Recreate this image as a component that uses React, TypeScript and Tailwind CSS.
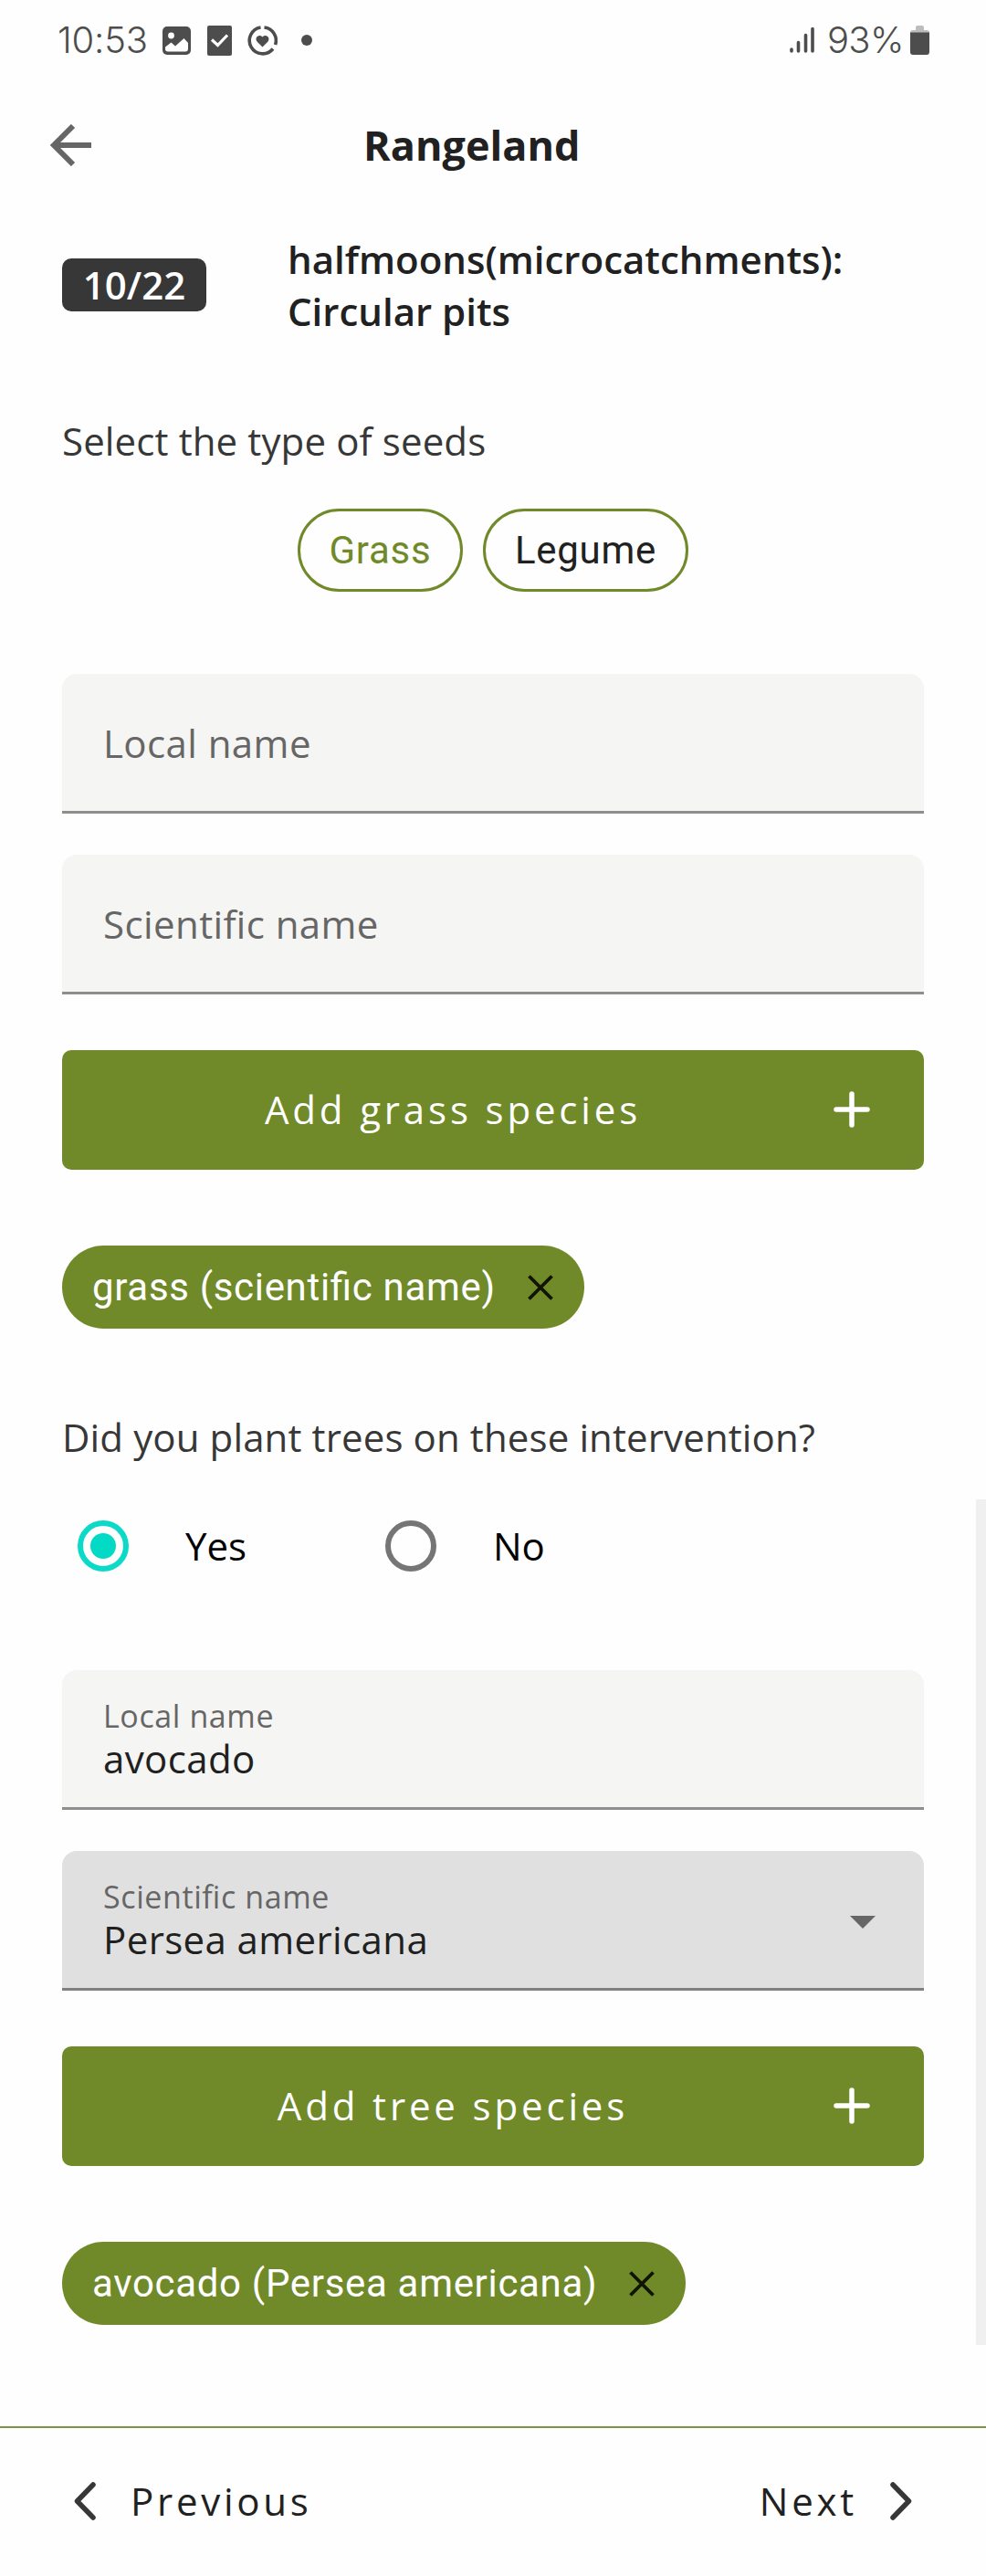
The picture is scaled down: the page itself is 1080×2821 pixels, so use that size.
import React from "react";

const green = "bg-[#718a29]";

function StatusBar() {
  return (
    <div className="flex h-[88px] items-center px-[63px] font-[Inter,sans-serif] text-[#4d4d4d]">
      <span className="w-[115px] text-[40px] font-light tracking-[-0.200px]">10:53</span>
      <svg className="size-[31px]" viewBox="0 0 31 31" fill="none">
        <rect width="31" height="31" rx="5" fill="currentColor" />
        <circle cx="9.500" cy="10" r="3.400" fill="white" />
        <path d="M3 22.500 9.500 17.500 14 21.500 23.500 13 28 18V24.500q0 3-3 3H6q-3 0-3-3Z" fill="white" />
      </svg>
      <svg className="ml-[18px] h-[33px] w-[27px]" viewBox="0 0 27 33" fill="none">
        <rect width="27" height="33" rx="2" fill="currentColor" />
        <path d="m5 15.500 6.500 6 10.500-11" stroke="white" strokeWidth="3.200" />
      </svg>
      <svg className="ml-[17px] size-[33px]" viewBox="0 0 33 33" fill="none">
        <path d="M18.500 2A14.500 14.500 0 0 1 30.600 21M28 25.500A14.500 14.500 0 1 1 14.500 2" stroke="currentColor" strokeWidth="3.600" />
        <path d="M16.500 23.500 10.500 17.500C7.500 14 12 8.500 16.500 12.500 21 8.500 25.500 14 22.500 17.500Z" fill="currentColor" />
      </svg>
      <span className="ml-[26px] size-3 rounded-full bg-[#4d4d4d]" />
      <svg className="ml-auto h-[30px] w-[27px]" viewBox="0 0 27 30" stroke="currentColor" strokeWidth="3.600" strokeLinecap="round">
        <path d="M2 25V27M9.500 17.500V27M17.500 9.500V27M25 2.500V27" />
      </svg>
      <span className="ml-[14px] w-[91px] text-[40px] font-light tracking-[-0.700px]">93%</span>
      <svg className="-mr-px h-[32px] w-[21px]" viewBox="0 0 21 32">
        <path d="M0 8Q0 5 3 5H6V2Q6 0 8 0H13Q15 0 15 2V5H18Q21 5 21 8Z" fill="#bdbdbd" />
        <path d="M0 7.500H21V29Q21 32 18 32H3Q0 32 0 29Z" fill="currentColor" />
      </svg>
    </div>
  );
}

function TextField({ label, value, select }: { label: string; value?: string; select?: boolean }) {
  return (
    <div
      className={
        "flex h-[153px] items-center justify-between rounded-t-[16px] border-b-[3px] pr-[53px] pl-[45px] [font-feature-settings:'liga'_1] " +
        (select ? "border-[#808080] bg-[#e0e0e0]" : "border-[#8e8e8e] bg-[#f5f5f3]")
      }
    >
      {value ? (
        <div className="flex flex-col pb-[2px]">
          <span className="text-[34px] leading-[46px] tracking-[0.600px] text-[#666666]">{label}</span>
          <span className="text-[42px] leading-[48px] tracking-[0.390px] text-[#202020]">{value}</span>
        </div>
      ) : (
        <span className="text-[42px] tracking-[0.420px] text-[#666666]">{label}</span>
      )}
      {select && (
        <svg className="mt-[6px] h-[14px] w-[28px]" viewBox="0 0 28 14" fill="#666666">
          <path d="M0 0H28L14 14Z" />
        </svg>
      )}
    </div>
  );
}

function AddButton({ children }: { children: React.ReactNode }) {
  return (
    <button className={"flex h-[131px] w-full items-center rounded-[10px] pr-[59px] pb-[2px] pl-[11px] text-white " + green}>
      <span className="flex-1 text-center text-[42px] tracking-[3.850px]">{children}</span>
      <svg className="size-[40px]" viewBox="0 0 40 40" stroke="white" strokeWidth="5.500" strokeLinecap="round">
        <path d="M3 20H37M20 3V37" />
      </svg>
    </button>
  );
}

function SpeciesChip({ children }: { children: React.ReactNode }) {
  return (
    <div className={"flex h-[91px] w-fit items-center gap-[35px] rounded-full pr-[34px] pl-[33px] text-white [font-feature-settings:'liga'_1] " + green}>
      <span className="font-[Roboto,sans-serif] text-[42px] tracking-[0.680px]">{children}</span>
      <svg className="size-[28px]" viewBox="0 0 28 28" stroke="#101400" strokeWidth="3.800">
        <path d="M1.500 1.500 26.500 26.500M26.500 1.500 1.500 26.500" />
      </svg>
    </div>
  );
}

function Radio({ checked, label }: { checked?: boolean; label: string }) {
  return (
    <label className="flex w-[337px] items-center gap-[62px] text-[42px] text-black">
      <span
        className={
          "flex size-[56px] items-center justify-center rounded-full border-6 " +
          (checked ? "border-[#0bdac8]" : "border-[#757575]")
        }
      >
        {checked && <span className="size-[28px] rounded-full bg-[#03dac5]" />}
      </span>
      <span className="pb-[2px]">{label}</span>
    </label>
  );
}

export default function App() {
  return (
    <div className="relative flex h-[2821px] w-[1080px] flex-col overflow-hidden bg-[#fefefe] font-['Open_Sans',sans-serif] text-[#212121]">
      <StatusBar />
      <header className="flex h-[142px] items-center px-[55px]">
        <svg className="size-[46px]" viewBox="0 0 46 46" fill="none" stroke="#666666" strokeWidth="6">
          <path d="M45 23H5M25 2 4 23 25 44" />
        </svg>
        <h1 className="ml-[297px] text-[45px] font-bold">Rangeland</h1>
      </header>

      <main className="flex flex-1 flex-col px-[68px]">
        <div className="mt-[25px] flex h-[114px] items-center text-[42px] leading-[57px] font-semibold">
          <span className="flex h-[58px] w-[158px] items-center justify-center rounded-[10px] bg-[#373737] pb-px text-white">10/22</span>
          <p className="ml-[89px]">
            halfmoons(microcatchments):
            <br />
            Circular pits
          </p>
        </div>

        <p className="mt-[85px] text-[42px] leading-[57px] tracking-[0.120px] text-[#373737]">Select the type of seeds</p>
        <div className="mt-[46px] flex justify-center gap-[22px] font-[Roboto,sans-serif] text-[42px] tracking-[0.750px]">
          <span className="flex h-[91px] w-[181px] items-center justify-center rounded-full border-[3px] border-[#718a29] text-[#718a29]">
            Grass
          </span>
          <span className="flex h-[91px] w-[225px] items-center justify-center rounded-full border-[3px] border-[#718a29] text-[#212121]">
            Legume
          </span>
        </div>

        <div className="mt-[90px] flex flex-col gap-[45px]">
          <TextField label="Local name" />
          <TextField label="Scientific name" />
        </div>
        <div className="mt-[61px]">
          <AddButton>Add grass species</AddButton>
        </div>
        <div className="mt-[83px]">
          <SpeciesChip>grass (scientific name)</SpeciesChip>
        </div>

        <p className="mt-[90px] text-[42px] leading-[57px] tracking-[0.120px] text-[#373737]">Did you plant trees on these intervention?</p>
        <div className="mt-[63px] flex h-[56px] items-center pl-[17px]">
          <Radio checked label="Yes" />
          <Radio label="No" />
        </div>

        <div className="mt-[108px] flex flex-col gap-[45px]">
          <TextField label="Local name" value="avocado" />
          <TextField label="Scientific name" value="Persea americana" select />
        </div>
        <div className="mt-[61px]">
          <AddButton>Add tree species</AddButton>
        </div>
        <div className="mt-[83px]">
          <SpeciesChip>avocado (Persea americana)</SpeciesChip>
        </div>
      </main>

      {/* scroll thumb over the page's right edge */}
      <div className="absolute top-[1642px] right-0 h-[926px] w-[11px] bg-[#f0f0f0]" />

      <footer className="flex h-[164px] items-center justify-between border-t-2 border-[#7f9344] px-[81px] pb-[3px] text-[42px] tracking-[3.750px]">
        <button className="flex items-center gap-[38px]">
          <svg className="h-[42px] w-[24px]" viewBox="0 0 24 42" fill="none" stroke="#373737" strokeWidth="5.500" strokeLinecap="round" strokeLinejoin="round">
            <path d="M21 3 3.500 21 21 39" />
          </svg>
          Previous
        </button>
        <button className="flex items-center gap-[36px]">
          Next
          <svg className="h-[42px] w-[24px]" viewBox="0 0 24 42" fill="none" stroke="#373737" strokeWidth="5.500" strokeLinecap="round" strokeLinejoin="round">
            <path d="M3 3 20.500 21 3 39" />
          </svg>
        </button>
      </footer>
    </div>
  );
}
